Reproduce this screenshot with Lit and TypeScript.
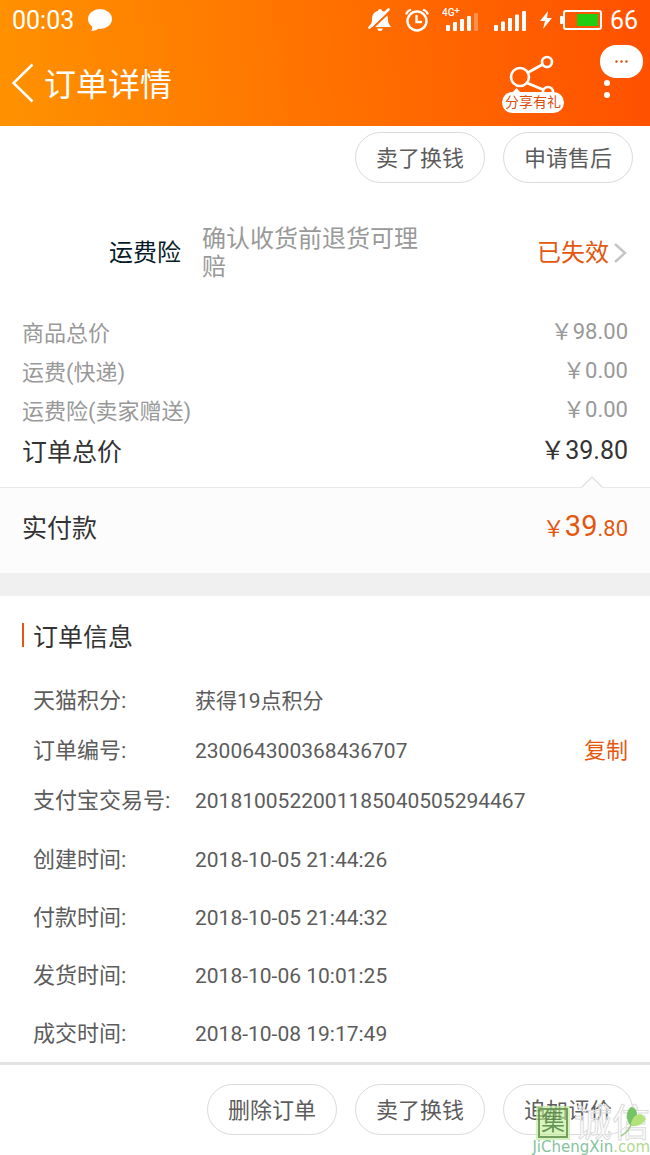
import { LitElement, html, css, svg } from "lit";
import { customElement, property } from "lit/decorators.js";

interface Amount {
  label: string;
  value: string;
}

interface InfoRow {
  label: string;
  value: string;
  copy?: boolean;
}

@customElement("status-bar")
class StatusBar extends LitElement {
  static styles = css`
    :host {
      display: flex;
      align-items: center;
      justify-content: space-between;
      height: 40px;
      padding: 0 12px;
      font-size: 25px;
      color: #fff;
    }
    .group {
      display: flex;
      align-items: center;
      gap: 14px;
    }
    .icons {
      gap: 13px;
    }
    .power {
      display: flex;
      align-items: center;
      gap: 8px;
    }
    svg {
      display: block;
    }
  `;

  private bars(offset: number, step: number, faintLast: boolean) {
    return [0, 1, 2, 3, 4].map(
      (i) => svg`<rect x=${offset + i * 7} y=${18 - i * step} width="4" height=${6 + i * step} rx="1"
        fill="#fff" fill-opacity=${faintLast && i === 4 ? 0.3 : 1} />`
    );
  }

  render() {
    return html`
      <div class="group">
        <span>00:03</span>
        <svg width="24" height="24" viewBox="0 0 24 24" aria-hidden="true">
          <ellipse cx="12" cy="11" rx="12" ry="10" fill="#fff" />
          <path d="M4 17Q5 21 3 23Q9 23 12 19Z" fill="#fff" />
        </svg>
      </div>
      <div class="group icons">
        <svg width="24" height="24" viewBox="0 0 24 24" aria-hidden="true">
          <path d="M12 1a2 2 0 0 1 2 2c5 1 6 5 6 9 0 3 1 4 3 7H1c2-3 3-4 3-7 0-4 1-8 6-9a2 2 0 0 1 2-2zM9 20.500h6q-1 2.500-3 2.500T9 20.500z" fill="#fff" />
          <path d="M3 21.500L23 2.500" stroke="#ff6600" stroke-width="2" />
          <path d="M1.500 19.500L20.500 1.500" stroke="#fff" stroke-width="2.600" stroke-linecap="round" />
        </svg>
        <svg width="24" height="24" viewBox="0 0 24 24" fill="none" stroke="#fff" stroke-width="2.400" stroke-linecap="round" aria-hidden="true">
          <circle cx="12" cy="13" r="9.500" />
          <path d="M11.500 8v6H16M1.500 5.500Q2.500 3 5 2M22.500 5.500Q21.500 3 19 2" />
        </svg>
        <svg width="38" height="26" viewBox="0 0 38 26" aria-hidden="true">
          ${this.bars(4, 3, true)}
          <rect x="0" y="0" width="18" height="11" fill="#ff6000" />
          <text x="0" y="9" font-size="10" font-weight="500" fill="#fff">4G</text>
          <path d="M15 1v5M12.500 3.500h5" stroke="#fff" stroke-width="1.200" />
        </svg>
        <svg width="34" height="26" viewBox="0 0 34 26" aria-hidden="true">${this.bars(1, 3.5, false)}</svg>
        <div class="power">
          <svg width="12" height="18" viewBox="0 0 12 18" aria-hidden="true">
            <path d="M8 0L0 10h5L3 18 12 7H7z" fill="#fff" />
          </svg>
          <svg width="42" height="22" viewBox="0 0 42 22" aria-hidden="true">
            <rect x="4" y="2" width="37" height="18" rx="2" fill="none" stroke="#fff" stroke-width="2" />
            <rect x="0" y="7" width="3" height="8" rx="1" fill="#fff" />
            <rect x="17" y="5" width="21" height="12" fill="#22cc11" />
          </svg>
          <span>66</span>
        </div>
      </div>
    `;
  }
}

@customElement("nav-bar")
class NavBar extends LitElement {
  static styles = css`
    :host {
      position: relative;
      display: flex;
      align-items: center;
      height: 86px;
      padding: 0 12px;
      color: #fff;
    }
    button {
      border: 0;
      padding: 0;
      background: none;
      font: inherit;
      color: inherit;
    }
    svg {
      display: block;
    }
    h1 {
      flex: 1;
      margin: 0;
      padding: 4px 0 0 10px;
      font-size: 32px;
      font-weight: 400;
      line-height: 40px;
    }
    .share {
      position: relative;
      margin-right: 32px;
    }
    .tag {
      position: absolute;
      left: 0;
      bottom: 0;
      width: 62px;
      border-radius: 11px;
      background: #fff;
      color: #d8500f;
      font-size: 14px;
      line-height: 21px;
      text-align: center;
    }
    .more {
      width: 42px;
    }
    .more svg {
      margin-left: 8px;
    }
    .bubble {
      position: absolute;
      top: 5px;
      right: 7px;
    }
  `;

  render() {
    return html`
      <button aria-label="返回">
        <svg width="22" height="40" viewBox="0 0 22 40" fill="none" stroke="#fff" stroke-width="2.500">
          <path d="M20.500 1.500L1.500 20 20.500 38.500" />
        </svg>
      </button>
      <h1>订单详情</h1>
      <button class="share">
        <svg width="62" height="60" viewBox="0 0 62 60" fill="none" stroke="#fff" stroke-width="2.600" aria-hidden="true">
          <circle cx="18" cy="24" r="9" />
          <circle cx="45" cy="9" r="5" />
          <circle cx="46" cy="39" r="5" />
          <path d="M26 19.500L40.500 11.500M25 30L42 37" />
          <path d="M9 41L14.500 35 20 41Z" fill="#fff" stroke="none" />
        </svg>
        <span class="tag">分享有礼</span>
      </button>
      <button class="more" aria-label="更多">
        <svg width="6" height="32" viewBox="0 0 6 32" fill="#fff">
          <circle cx="3" cy="4" r="3" />
          <circle cx="3" cy="16" r="3" />
          <circle cx="3" cy="28" r="3" />
        </svg>
      </button>
      <button class="bubble" aria-label="消息">
        <svg width="43" height="33" viewBox="0 0 43 33">
          <rect width="43" height="33" rx="16" fill="#fff" />
          <g fill="#d8500f">
            <circle cx="16.500" cy="16.500" r="1.200" />
            <circle cx="21.500" cy="16.500" r="1.200" />
            <circle cx="26.500" cy="16.500" r="1.200" />
          </g>
        </svg>
      </button>
    `;
  }
}

@customElement("action-row")
class ActionRow extends LitElement {
  @property({ attribute: false }) actions: string[] = [];

  static styles = css`
    :host {
      display: flex;
      justify-content: flex-end;
      gap: 18px;
      padding: 0 17px;
    }
    button {
      width: 130px;
      height: 51px;
      padding: 0 0 4px;
      border: 1px solid #dadada;
      border-radius: 26px;
      background: #fff;
      color: #5c5c5c;
      font: inherit;
      font-size: 22px;
    }
  `;

  render() {
    return this.actions.map((a) => html`<button>${a}</button>`);
  }
}

@customElement("site-mark")
class SiteMark extends LitElement {
  static styles = css`
    :host {
      display: grid;
      justify-items: end;
      pointer-events: none;
    }
    .name {
      display: flex;
      align-items: center;
      gap: 6px;
      height: 34px;
    }
    .seal {
      box-sizing: border-box;
      width: 30px;
      height: 30px;
      border: 2px solid rgba(92, 138, 74, 0.8);
      outline: 2px solid rgba(197, 237, 160, 0.7);
      background: rgba(190, 236, 145, 0.6);
      color: rgba(70, 120, 60, 0.8);
      font-size: 24px;
      line-height: 25px;
      text-align: center;
    }
    .outline {
      font-size: 38px;
      line-height: 34px;
      color: rgba(255, 255, 255, 0.5);
      -webkit-text-stroke: 1px #dcdcdc;
    }
    .leaf {
      position: absolute;
      right: 2px;
      top: 0;
    }
    .domain {
      font-family: "DejaVu Sans", sans-serif;
      font-size: 15px;
      line-height: 15px;
      color: #84c39c;
    }
    .tail {
      color: #b2d893;
    }
  `;

  render() {
    return html`
      <div class="name">
        <span class="seal">集</span>
        <span class="outline">诚信</span>
      </div>
      <svg class="leaf" width="28" height="32" viewBox="0 0 28 32" aria-hidden="true">
        <path d="M11 20C5 14 6 4 11 1c4 0 6 4 6 8-3 2-5 6-6 11z" fill="#74c365" />
        <path d="M11 20c0-7 4-12 9-12 3 0 4 3 6 5-3 5-8 8-15 7z" fill="#b4e27a" />
        <path d="M11 19Q8 26 1 30" fill="none" stroke="#9bc98a" stroke-width="1.500" />
      </svg>
      <div class="domain">JiChengXin<span class="tail">.com</span></div>
    `;
  }
}

@customElement("app-root")
class AppRoot extends LitElement {
  static styles = css`
    :host {
      display: flex;
      flex-direction: column;
      min-height: 100vh;
      background: #fff;
      color: #333;
      font-family: Roboto, "Noto Sans CJK SC", sans-serif;
      font-weight: 400;
    }
    header {
      background: linear-gradient(84deg, #ff9200, #ff5000);
    }
    main {
      flex: 1;
    }
    .top {
      padding-top: 6px;
    }
    .insurance {
      display: flex;
      align-items: center;
      padding: 42px 23px 33px 109px;
      font-size: 24px;
      line-height: 28px;
    }
    .insurance-name {
      flex: none;
      width: 93px;
      color: #051b28;
    }
    .insurance-note {
      width: 220px;
      color: #999;
    }
    .insurance-state {
      display: flex;
      align-items: center;
      gap: 4px;
      margin-left: auto;
      color: #e4570f;
      text-decoration: none;
    }
    dl,
    dd,
    h2 {
      margin: 0;
    }
    .amounts {
      padding: 0 22px 14px;
      font-size: 22px;
      line-height: 39px;
      color: #999;
    }
    .line {
      display: flex;
      justify-content: space-between;
    }
    .amounts dd {
      line-height: 36px;
    }
    .total {
      padding-top: 2px;
      font-size: 25px;
      line-height: 40px;
      color: #333;
    }
    .paid {
      position: relative;
      display: flex;
      align-items: center;
      justify-content: space-between;
      height: 75px;
      padding: 0 22px 10px;
      border-top: 1px solid #e8e8e8;
      background: #fcfcfc;
      font-size: 25px;
    }
    .notch {
      position: absolute;
      right: 46px;
      top: -13px;
    }
    .price {
      color: #e4570f;
      font-size: 22px;
    }
    .price-main {
      font-size: 29px;
    }
    .info {
      border-top: 23px solid #f0f0f0;
      padding: 22px 22px 0;
    }
    .heading {
      display: flex;
      align-items: center;
      gap: 9px;
      height: 34px;
      padding-bottom: 22px;
      font-size: 25px;
      font-weight: 400;
    }
    .heading::before {
      content: "";
      width: 2px;
      height: 24px;
      background: #e4570f;
    }
    .rows {
      padding-left: 11px;
      font-size: 22px;
      color: #5c5c5c;
    }
    .row {
      display: flex;
      align-items: baseline;
      height: 50px;
      line-height: 54px;
    }
    .row.time {
      height: 58px;
      line-height: 62px;
    }
    .first-time {
      margin-top: 5px;
    }
    .row dt {
      flex: none;
      width: 162px;
    }
    .row dd {
      flex: 1;
      font-size: 21px;
    }
    .copy {
      border: 0;
      padding: 0;
      background: none;
      color: #e4570f;
      font: inherit;
    }
    footer {
      position: relative;
      padding: 19px 0 20px;
      border-top: 3px solid #e3e3e3;
    }
    .mark {
      position: absolute;
      right: 0;
      bottom: 0;
    }
  `;

  private amounts: Amount[] = [
    { label: "商品总价", value: "￥98.00" },
    { label: "运费(快递)", value: "￥0.00" },
    { label: "运费险(卖家赠送)", value: "￥0.00" },
  ];

  private details: InfoRow[] = [
    { label: "天猫积分:", value: "获得19点积分" },
    { label: "订单编号:", value: "230064300368436707", copy: true },
    { label: "支付宝交易号:", value: "2018100522001185040505294467" },
  ];

  private times: InfoRow[] = [
    { label: "创建时间:", value: "2018-10-05 21:44:26" },
    { label: "付款时间:", value: "2018-10-05 21:44:32" },
    { label: "发货时间:", value: "2018-10-06 10:01:25" },
    { label: "成交时间:", value: "2018-10-08 19:17:49" },
  ];

  render() {
    return html`
      <header>
        <status-bar></status-bar>
        <nav-bar></nav-bar>
      </header>
      <main>
        <action-row class="top" .actions=${["卖了换钱", "申请售后"]}></action-row>
        <section class="insurance">
          <span class="insurance-name">运费险</span>
          <span class="insurance-note">确认收货前退货可理赔</span>
          <a class="insurance-state" href="#insurance">
            已失效
            <svg width="14" height="22" viewBox="0 0 14 22" fill="none" stroke="#c4c4c4" stroke-width="2.400" aria-hidden="true">
              <path d="M2 2l10 9-10 9" />
            </svg>
          </a>
        </section>
        <dl class="amounts">
          ${this.amounts.map((a) => html`<div class="line"><dt>${a.label}</dt><dd>${a.value}</dd></div>`)}
          <div class="line total"><dt>订单总价</dt><dd>￥39.80</dd></div>
        </dl>
        <section class="paid">
          <svg class="notch" width="24" height="14" viewBox="0 0 24 14" aria-hidden="true">
            <path d="M1 13L12 2l11 11v1H1z" fill="#fcfcfc" />
            <path d="M1 13L12 2l11 11" fill="none" stroke="#e4e4e4" stroke-width="1.500" />
          </svg>
          <span>实付款</span>
          <span class="price">￥<span class="price-main">39</span>.80</span>
        </section>
        <section class="info">
          <h2 class="heading">订单信息</h2>
          <dl class="rows">
            ${this.details.map(
              (d) => html`<div class="row">
                <dt>${d.label}</dt>
                <dd>${d.value}</dd>
                ${d.copy ? html`<button class="copy">复制</button>` : ""}
              </div>`
            )}
          </dl>
          <dl class="rows first-time">
            ${this.times.map((t) => html`<div class="row time"><dt>${t.label}</dt><dd>${t.value}</dd></div>`)}
          </dl>
        </section>
      </main>
      <footer>
        <action-row .actions=${["删除订单", "卖了换钱", "追加评价"]}></action-row>
        <site-mark class="mark"></site-mark>
      </footer>
    `;
  }
}
